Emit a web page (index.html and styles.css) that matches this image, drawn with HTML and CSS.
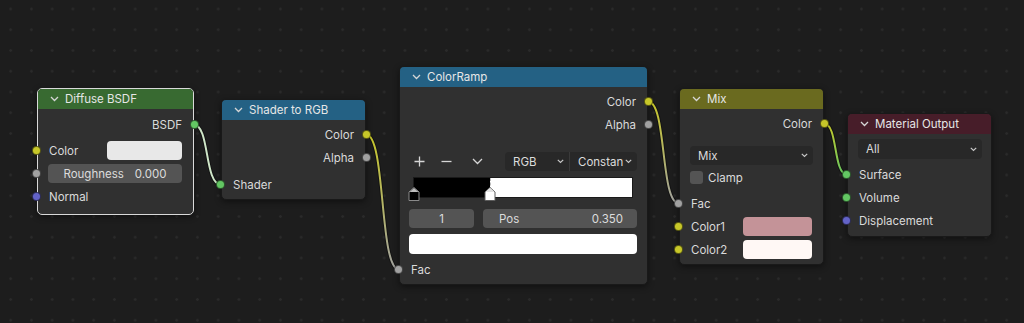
FILE: index.html
```html
<!DOCTYPE html>
<html lang="en">
<head>
  <meta charset="UTF-8">
  <title>Shader Editor</title>
  <link rel="stylesheet" href="styles.css">
</head>
<body>
<div class="editor">

  <!-- links sit under the nodes -->
  <svg class="links" width="1024" height="323">
    <defs>
      <linearGradient id="lnk-rgb" gradientUnits="userSpaceOnUse" x1="366" y1="135" x2="399" y2="270">
        <stop offset="0" stop-color="#c7c729"/><stop offset="1" stop-color="#a1a1a1"/>
      </linearGradient>
      <linearGradient id="lnk-ramp" gradientUnits="userSpaceOnUse" x1="648" y1="102" x2="679" y2="204">
        <stop offset="0" stop-color="#c7c729"/><stop offset="1" stop-color="#a1a1a1"/>
      </linearGradient>
      <linearGradient id="lnk-out" gradientUnits="userSpaceOnUse" x1="824" y1="124" x2="847" y2="175">
        <stop offset="0" stop-color="#c7c729"/><stop offset="1" stop-color="#63c763"/>
      </linearGradient>
    </defs>
    <g class="link-shadow">
      <path d="M193.5 124.5 C210 124.5, 204 184.5, 221 184.5"/>
      <path d="M366 134.5 C386 134.5, 379 269.5, 399 269.5"/>
      <path d="M648 101.5 C667 101.5, 660 203.5, 679 203.5"/>
      <path d="M824 123.5 C838 123.5, 833 174.5, 847 174.5"/>
    </g>
    <g class="link">
      <path stroke="#cfe6c8" d="M193.5 124.5 C210 124.5, 204 184.5, 221 184.5"/>
      <path stroke="url(#lnk-rgb)" d="M366 134.5 C386 134.5, 379 269.5, 399 269.5"/>
      <path stroke="url(#lnk-ramp)" d="M648 101.5 C667 101.5, 660 203.5, 679 203.5"/>
      <path stroke="url(#lnk-out)" d="M824 123.5 C838 123.5, 833 174.5, 847 174.5"/>
    </g>
  </svg>

  <!-- Diffuse BSDF -->
  <div class="node selected n-diffuse">
    <div class="node-head head-shader">
      <svg class="chev" width="9" height="6" viewBox="0 0 9 6"><path d="M1 1l3.5 3.5L8 1"/></svg>
      Diffuse BSDF
    </div>
    <div class="node-body pt4">
      <div class="row out"><span>BSDF</span><i class="sock s-shader"></i></div>
      <div class="row in mt3"><i class="sock s-color"></i><span>Color</span><span class="swatch sw-grey"></span></div>
      <div class="row in"><i class="sock s-float"></i>
        <div class="field field-center"><span>Roughness</span><span>0.000</span></div>
      </div>
      <div class="row in"><i class="sock s-vector"></i><span>Normal</span></div>
    </div>
  </div>

  <!-- Shader to RGB -->
  <div class="node n-torgb">
    <div class="node-head head-conv">
      <svg class="chev" width="9" height="6" viewBox="0 0 9 6"><path d="M1 1l3.5 3.5L8 1"/></svg>
      Shader to RGB
    </div>
    <div class="node-body">
      <div class="row out"><span>Color</span><i class="sock s-color"></i></div>
      <div class="row out"><span>Alpha</span><i class="sock s-float"></i></div>
      <div class="row in mt4"><i class="sock s-shader"></i><span>Shader</span></div>
    </div>
  </div>

  <!-- ColorRamp -->
  <div class="node n-ramp">
    <div class="node-head head-conv">
      <svg class="chev" width="9" height="6" viewBox="0 0 9 6"><path d="M1 1l3.5 3.5L8 1"/></svg>
      ColorRamp
    </div>
    <div class="node-body">
      <div class="row out"><span>Color</span><i class="sock s-color"></i></div>
      <div class="row out"><span>Alpha</span><i class="sock s-float"></i></div>

      <div class="ramp-tools mt16">
        <span class="tool"><svg width="11" height="11" viewBox="0 0 11 11"><path d="M5.5 0.5v10M0.5 5.5h10"/></svg></span>
        <span class="tool"><svg width="11" height="11" viewBox="0 0 11 11"><path d="M0.5 5.5h10"/></svg></span>
        <span class="tool tool-gap"><svg width="11" height="7" viewBox="0 0 11 7"><path d="M1 1l4.5 4.5L10 1"/></svg></span>
        <div class="select-group">
          <div class="select"><span>RGB</span><svg class="mini-chev" width="7" height="5" viewBox="0 0 7 5"><path d="M0.8 0.8l2.7 2.7 2.7-2.7"/></svg></div>
          <div class="select"><span>Constan</span><svg class="mini-chev" width="7" height="5" viewBox="0 0 7 5"><path d="M0.8 0.8l2.7 2.7 2.7-2.7"/></svg></div>
        </div>
      </div>

      <div class="ramp mt6">
        <div class="ramp-black"></div>
        <div class="ramp-white"></div>
        <span class="ramp-mark"></span>
        <svg class="stop stop-a" width="12" height="14" viewBox="0 0 12 14">
          <path d="M6 0.5L11 5v8.5H1V5z" fill="#000" stroke="#8a8a8a"/>
          <path d="M6 1L10.5 5H1.5z" fill="#bdbdbd"/>
        </svg>
        <svg class="stop stop-b" width="12" height="14" viewBox="0 0 12 14">
          <path d="M6 0.5L11 5v8.5H1V5z" fill="#fff" stroke="#5c5c5c"/>
          <path d="M6 1L10.5 5H1.5z" fill="#e2e2e2"/>
        </svg>
      </div>

      <div class="ramp-fields mt11">
        <div class="field field-index"><span>1</span></div>
        <div class="field field-pos"><span>Pos</span><span>0.350</span></div>
      </div>

      <div class="ramp-color mt6"></div>

      <div class="row in mt4"><i class="sock s-float"></i><span>Fac</span></div>
    </div>
  </div>

  <!-- Mix -->
  <div class="node n-mix">
    <div class="node-head head-color">
      <svg class="chev" width="9" height="6" viewBox="0 0 9 6"><path d="M1 1l3.5 3.5L8 1"/></svg>
      Mix
    </div>
    <div class="node-body">
      <div class="row out"><span>Color</span><i class="sock s-color"></i></div>
      <div class="select wide mt11"><span>Mix</span><svg class="mini-chev" width="7" height="5" viewBox="0 0 7 5"><path d="M0.8 0.8l2.7 2.7 2.7-2.7"/></svg></div>
      <div class="check-row mt3"><span class="check"></span><span>Clamp</span></div>
      <div class="row in mt5"><i class="sock s-float"></i><span>Fac</span></div>
      <div class="row in"><i class="sock s-color"></i><span>Color1</span><span class="swatch sw-pink"></span></div>
      <div class="row in"><i class="sock s-color"></i><span>Color2</span><span class="swatch sw-cream"></span></div>
    </div>
  </div>

  <!-- Material Output -->
  <div class="node n-output">
    <div class="node-head head-output">
      <svg class="chev" width="9" height="6" viewBox="0 0 9 6"><path d="M1 1l3.5 3.5L8 1"/></svg>
      Material Output
    </div>
    <div class="node-body pt5">
      <div class="select wide"><span>All</span><svg class="mini-chev" width="7" height="5" viewBox="0 0 7 5"><path d="M0.8 0.8l2.7 2.7 2.7-2.7"/></svg></div>
      <div class="row in mt4"><i class="sock s-shader"></i><span>Surface</span></div>
      <div class="row in"><i class="sock s-shader"></i><span>Volume</span></div>
      <div class="row in"><i class="sock s-vector"></i><span>Displacement</span></div>
    </div>
  </div>

</div>
</body>
</html>
```

FILE: styles.css
```css
* {
  box-sizing: border-box;
}
body {
  margin: 0;
  width: 1024px;
  height: 323px;
  overflow: hidden;
  background-color: #1d1d1d;
  background-image: radial-gradient(circle at center, #2a2a2a 0 1px, transparent 1.6px);
  background-size: 20.75px 20.75px;
  background-position: 0.3px -1.4px;
  font-family: Inter, "DejaVu Sans", sans-serif;
  font-size: 11.5px;
  color: #dadada;
}
.editor {
  position: relative;
  width: 1024px;
  height: 323px;
}

/* links */
.links {
  position: absolute;
  left: 0;
  top: 0;
}
.links path {
  fill: none;
}
.link-shadow path {
  stroke: rgba(0, 0, 0, 0.35);
  stroke-width: 4;
}
.link path {
  stroke-width: 2;
}

/* nodes */
.node {
  position: absolute;
  background: #303030;
  border: 1px solid #191919;
  border-radius: 5px;
  box-shadow: 0 2px 6px rgba(0, 0, 0, 0.45);
}
.node.selected {
  border-color: #d9d9d9;
}
.n-diffuse { left: 37px; top: 88px; width: 157px; }
.n-torgb   { left: 221px; top: 99px; width: 145px; }
.n-ramp    { left: 399px; top: 66px; width: 249px; }
.n-mix     { left: 679px; top: 88px; width: 145px; }
.n-output  { left: 847px; top: 113px; width: 145px; }

.node-head {
  height: 20px;
  display: flex;
  align-items: center;
  gap: 6px;
  padding-left: 12px;
  border-radius: 4px 4px 0 0;
  color: #e6e6e6;
}
.head-shader { background: #386a31; }
.head-conv   { background: #246184; }
.head-color  { background: #6a6a1f; }
.head-output { background: #471d29; }

.chev path, .mini-chev path, .tool path {
  fill: none;
  stroke: #d6d6d6;
  stroke-width: 1.3;
}
.mini-chev path {
  stroke: #c8c8c8;
  stroke-width: 1.2;
}

.node-body {
  padding: 3px 0 3px;
}
.pt4 { padding-top: 4px; padding-bottom: 6px; }
.pt5 { padding-top: 5px; padding-bottom: 4px; }

.row {
  position: relative;
  height: 23px;
  display: flex;
  align-items: center;
  padding: 0 11px 0 11px;
}
.row.out {
  justify-content: flex-end;
}
.row.in {
  justify-content: space-between;
}
.row.in > span:only-of-type {
  margin-right: auto;
}
.sock {
  position: absolute;
  top: 50%;
  width: 9px;
  height: 9px;
  margin-top: -4.5px;
  border-radius: 50%;
  border: 1px solid rgba(0, 0, 0, 0.55);
}
.row.in .sock { left: -6px; }
.row.out .sock { right: -6px; }
.s-shader { background: #63c763; }
.s-color  { background: #c7c729; }
.s-float  { background: #a1a1a1; }
.s-vector { background: #6363c7; }

.swatch {
  width: 75px;
  height: 19px;
  border-radius: 4px;
}
.sw-grey  { background: #e8e8e8; }
.sw-pink  { background: #c49398; width: 69px; }
.sw-cream { background: #fff8f5; width: 69px; }

.field {
  height: 19px;
  display: flex;
  align-items: center;
  background: #545454;
  border-radius: 4px;
  color: #dcdcdc;
}
.field-center {
  flex: 1;
  margin-left: -1px;
  justify-content: center;
  gap: 11px;
}

/* color ramp */
.ramp-tools {
  height: 19px;
  display: flex;
  align-items: center;
  padding: 0 10px 0 9px;
}
.tool {
  width: 20px;
  height: 19px;
  display: flex;
  align-items: center;
  justify-content: center;
  margin-right: 7px;
}
.tool-gap {
  margin-left: 4px;
  margin-right: 0;
}
.select-group {
  margin-left: auto;
  display: flex;
  background: #282828;
  border-radius: 4px;
  height: 19px;
}
.select-group .select {
  background: none;
  border-radius: 0;
}
.select-group .select:first-child {
  width: 65px;
  border-right: 1px solid #3a3a3a;
}
.select-group .select:last-child {
  width: 67px;
}
.select {
  height: 19px;
  display: flex;
  align-items: center;
  justify-content: space-between;
  padding: 0 5px 0 8px;
  background: #282828;
  border-radius: 4px;
  color: #dcdcdc;
}
.select.wide {
  margin-left: 10px;
  margin-right: 10px;
  height: 20px;
}
.n-mix .select.wide {
  height: 19px;
}
.n-output .select.wide {
  margin-right: 9px;
}

.ramp {
  position: relative;
  height: 21px;
  margin-left: 13px;
  margin-right: 14px;
  display: flex;
  border: 1px solid #1a1a1a;
}
.ramp-black {
  width: 35%;
  background: #000;
}
.ramp-white {
  flex: 1;
  background: #fff;
}
.ramp-mark {
  position: absolute;
  left: 35%;
  top: 0;
  height: 12px;
  border-left: 1px dashed #bbb;
}
.stop {
  position: absolute;
  top: 9px;
  margin-left: -6px;
}
.stop-a { left: 0; }
.stop-b { left: 35%; }

.ramp-fields {
  display: flex;
  gap: 9px;
  padding: 0 10px 0 9px;
}
.field-index {
  width: 65px;
  justify-content: center;
}
.field-pos {
  flex: 1;
  justify-content: space-between;
  padding: 0 14px 0 16px;
}
.ramp-color {
  height: 20px;
  margin-left: 9px;
  margin-right: 10px;
  background: #fff;
  border-radius: 4px;
}

/* mix */
.check-row {
  height: 19px;
  display: flex;
  align-items: center;
  gap: 5px;
  padding-left: 10px;
}
.check {
  width: 13px;
  height: 13px;
  background: #545454;
  border-radius: 3px;
}

/* spacing helpers, kept last so they win */
.mt3 { margin-top: 3px; }
.mt4 { margin-top: 4px; }
.mt5 { margin-top: 5px; }
.mt6 { margin-top: 6px; }
.mt11 { margin-top: 11px; }
.mt16 { margin-top: 16px; }
```
